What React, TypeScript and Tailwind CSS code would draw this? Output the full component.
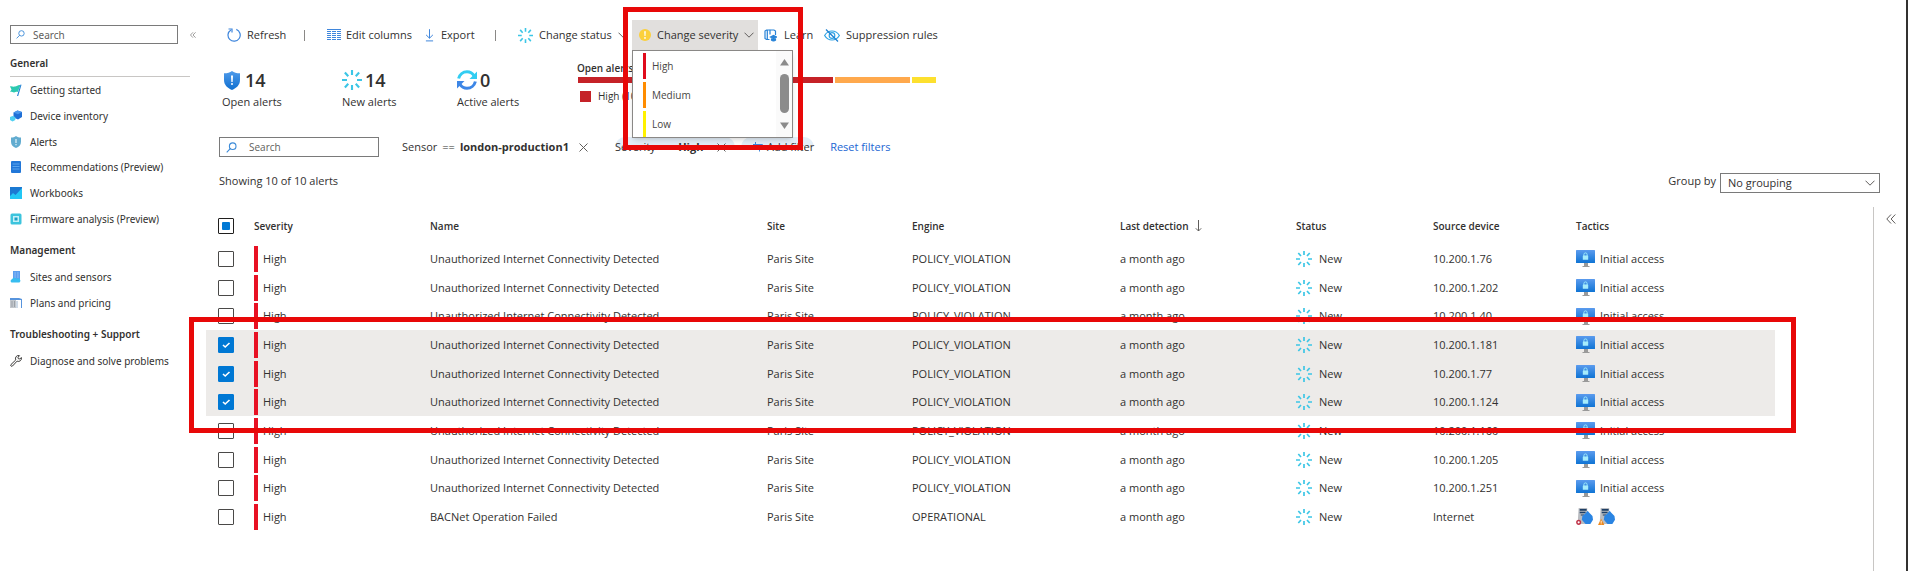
import React from "react";

type IconProps = { className?: string };

function Magnifier({ className }: IconProps) {
  return (
    <svg viewBox="0 0 12 12" className={className} fill="none" stroke="#3b8ad8" strokeWidth="1.200">
      <circle cx="7.3" cy="4.5" r="3.6" />
      <path d="M4.9 7 .8 11.200" />
    </svg>
  );
}

function DoubleChevron({ className }: IconProps) {
  return (
    <svg viewBox="0 0 10 10" className={className} fill="none" stroke="#605e5c" strokeWidth="1">
      <path d="M5 .5.8 5 5 9.500M9.300.5 5.100 5l4.200 4.500" />
    </svg>
  );
}

function Chevron({ className }: IconProps) {
  return (
    <svg viewBox="0 0 10 6" className={className} fill="none" stroke="#605e5c" strokeWidth="1">
      <path d="M.5.7 5 5.200 9.500.7" />
    </svg>
  );
}

function Close({ className }: IconProps) {
  return (
    <svg viewBox="0 0 9 9" className={className} fill="none" stroke="#605e5c" strokeWidth="1">
      <path d="m.5.500 8 8m0-8-8 8" />
    </svg>
  );
}

function Spark({ className }: IconProps) {
  return (
    <svg viewBox="0 0 16 16" className={className} fill="none" stroke="#3cc6e6" strokeWidth="1.700">
      <path d="M8 0v4M8 12v4M0 8h4M12 8h4M2.300 2l2.700 3M11 11l2.700 3M13.700 2 11 5M5 11l-2.700 3" />
    </svg>
  );
}

function RefreshIcon({ className }: IconProps) {
  return (
    <svg viewBox="0 0 14 14" className={className} fill="none" stroke="#3f86dc" strokeWidth="1.200">
      <path d="M9.300 1.400A6.100 6.100 0 1 1 3.900 1.900" />
      <path d="M1.500 1h3.500v3.500" />
    </svg>
  );
}

function ColumnsIcon({ className }: IconProps) {
  return (
    <svg viewBox="0 0 14 12" className={className} fill="none" stroke="#3f86dc" strokeWidth="1">
      <path d="M0 .5h14" />
      <path d="M0 2.500h14M0 4.500h14M0 6.500h14M0 8.500h14M0 10.500h14" strokeDasharray="4 1" />
    </svg>
  );
}

function ExportIcon({ className }: IconProps) {
  return (
    <svg viewBox="0 0 10 14" className={className} fill="none" stroke="#3f86dc" strokeWidth="1.100">
      <path d="M5 0v10M1.200 6.300 5 10l3.800-3.700M1 13h8" />
    </svg>
  );
}

function WarningDot({ className }: IconProps) {
  return (
    <svg viewBox="0 0 12 12" className={className}>
      <circle cx="6" cy="6" r="6" fill="#fbd03b" />
      <path d="M5.200 2.200h1.600L6.500 7h-1z" fill="#fff" />
      <circle cx="6" cy="8.900" r=".9" fill="#fff" />
    </svg>
  );
}

function LearnIcon({ className }: IconProps) {
  return (
    <svg viewBox="0 0 13 13" className={className} fill="none" stroke="#2783d8" strokeWidth="1.200">
      <path d="M5.500 10.500H2.500L1 9.500V2l1.500-1H5.500l.5.500.500-.500H10L11.500 2V6M3.300 1v9.500M6 1.500v4" />
      <path d="M6.500 8 9.500 6.500 12.500 8 9.500 9.500z" fill="#2783d8" />
      <path d="M7.500 9.500v1.700c1 1 3 1 4 0V9.500" fill="#2783d8" />
    </svg>
  );
}

function HiddenEye({ className }: IconProps) {
  return (
    <svg viewBox="0 0 16 13" className={className} fill="none" stroke="#2fa3e4" strokeWidth="1.200">
      <path d="M.6 6.500C2.500 3.300 5 2 8 2s5.500 1.300 7.400 4.500C13.500 9.700 11 11 8 11S2.500 9.700.6 6.500z" />
      <circle cx="8" cy="6.500" r="2.800" />
      <path d="m2 .5 12 12" stroke="#1b7fd0" />
    </svg>
  );
}

function BlueShield({ className }: IconProps) {
  return (
    <svg viewBox="0 0 16 19" className={className}>
      <defs>
        <linearGradient id="shield" x2="0" y2="1">
          <stop stopColor="#4f9bea" />
          <stop offset="1" stopColor="#0f6fd0" />
        </linearGradient>
      </defs>
      <path d="M8 0c2 1.600 4.500 2.300 8 2.300V9c0 5-3.500 8-8 10-4.500-2-8-5-8-10V2.300C3.500 2.300 6 1.600 8 0z" fill="url(#shield)" />
      <path d="M7 4.500h2L8.600 11H7.400z" fill="#fff" />
      <circle cx="8" cy="13" r="1" fill="#fff" />
    </svg>
  );
}

function SyncIcon({ className }: IconProps) {
  return (
    <svg viewBox="0 0 20 20" className={className} fill="none">
      <path d="M1.600 8.500C2.600 4.500 6 1.800 10 1.800c3 0 5.500 1.500 7 4" stroke="#32cdf2" strokeWidth="3" />
      <path d="M20 1.500V9h-7.500z" fill="#32cdf2" />
      <path d="M18.400 11.500c-1 4-4.400 6.700-8.400 6.700-3 0-5.500-1.500-7-4" stroke="#3d86e6" strokeWidth="3" />
      <path d="M0 18.500V11h7.500z" fill="#3d86e6" />
    </svg>
  );
}

function FlagIcon() {
  return (
    <svg viewBox="0 0 12 12" className="size-3 shrink-0">
      <path d="M0 2.500c1.500-.5 3 .5 5 0s3-2 5.500-1.500L7.800 8C6 7.500 5.500 8.500 4 8.500S1.500 7.500 0 8l1.500-2.500z" fill="#2cc9b0" />
      <path d="m10.500.5 1 .3L8.200 12H7z" fill="#1f7fd6" />
    </svg>
  );
}

function CubesIcon() {
  return (
    <svg viewBox="0 0 12 12" className="size-3 shrink-0">
      <path d="M7.500.5 12 2v5L8 9.500 3.500 7.500V2.500z" fill="#1f6fd6" />
      <path d="M7.500.5 12 2 8 4.200 3.500 2.500z" fill="#4b97ec" />
      <path d="m2.500 6 2.800 1v3L2.500 11.500 0 10V7z" fill="#4fd0f2" />
    </svg>
  );
}

function AlertShield() {
  return (
    <svg viewBox="0 0 12 12" className="size-3 shrink-0">
      <path d="M6 0c1.500 1 3 1.500 5 1.500v4.300C11 9 9 11 6 12 3 11 1 9 1 5.800V1.500C3 1.500 4.500 1 6 0z" fill="#62acd0" />
      <path d="M5.400 3h1.200v4H5.400zM5.400 8h1.200v1.200H5.400z" fill="#e4f3fa" />
    </svg>
  );
}

function ListIcon() {
  return (
    <svg viewBox="0 0 12 12" className="size-3 shrink-0">
      <rect x="1" width="10" height="12" rx="1" fill="#2277d8" />
      <path d="M2.500 3h7M2.500 5.500h7M2.500 8h7" stroke="#5aa5ee" />
    </svg>
  );
}

function WorkbookIcon() {
  return (
    <svg viewBox="0 0 12 12" className="size-3 shrink-0">
      <rect width="12" height="12" rx=".6" fill="#2cb4f0" />
      <path d="M0 12V9l3-3 2.500 2L12 1v11z" fill="#22c7f5" />
      <path d="M0 0h12v1L5.500 8 3 6 0 9z" fill="#1b79d2" />
    </svg>
  );
}

function ChipIcon() {
  return (
    <svg viewBox="0 0 12 12" className="size-3 shrink-0">
      <rect x=".5" y=".5" width="11" height="11" rx="1.500" fill="#3cc4dd" />
      <rect x="3" y="3" width="6" height="6" fill="#c4f1f8" />
      <rect x="4.500" y="4.500" width="3" height="3" fill="#1d9ec6" />
    </svg>
  );
}

function SitesIcon() {
  return (
    <svg viewBox="0 0 12 12" className="size-3 shrink-0">
      <path d="M3 0h7v9H3z" fill="#5c9ff0" />
      <path d="M4.500 2h1.200M7.300 2h1.200M4.500 4h1.200M7.300 4h1.200M4.500 6h1.200M7.300 6h1.200" stroke="#a8cbf7" />
      <path d="M1.500 11.500a1.800 1.800 0 0 1 .5-3.300 2.600 2.600 0 0 1 4.600-.3A2 2 0 0 1 9.500 11.500z" fill="#37bdf0" />
    </svg>
  );
}

function PlansIcon() {
  return (
    <svg viewBox="0 0 12 12" className="size-3 shrink-0">
      <path d="M0 1h9l3 1v9h-1V3H0z" fill="#5794dd" />
      <path d="M0 3h6v8H0z" fill="#c3c7cc" />
      <path d="M1.500 5h1M1.500 7h1M1.500 9h1M4 5h1M4 7h1M4 9h1" stroke="#737a82" />
      <path d="M7 4v7" stroke="#9fb6cf" />
    </svg>
  );
}

function WrenchIcon() {
  return (
    <svg viewBox="0 0 12 12" className="size-3 shrink-0" fill="none" stroke="#3b3a39" strokeWidth="1">
      <path d="M11.300 2.500a3 3 0 0 1-4.200 3.600L2.500 11a1 1 0 0 1-1.500-1.500l4.800-4.600A3 3 0 0 1 9.500.7L8 2.200l.3 1.500 1.500.3z" />
    </svg>
  );
}

function MonitorLock() {
  return (
    <svg viewBox="0 0 19 17" className="h-[17px] w-[19px]">
      <defs>
        <linearGradient id="screen" x2="0" y2="1">
          <stop stopColor="#5b9bee" />
          <stop offset="1" stopColor="#0f74d4" />
        </linearGradient>
      </defs>
      <rect width="19" height="13" rx=".5" fill="url(#screen)" />
      <path d="M8 13h4v3H8zM6.500 16h7v1h-7z" fill="#9a9a9a" />
      <path d="M7.900 6V4.500a1.600 1.600 0 0 1 3.200 0V6" fill="none" stroke="#9be9fb" />
      <rect x="6.800" y="5.500" width="5.400" height="4.300" rx=".4" fill="#a5ecfc" />
    </svg>
  );
}

function DeviceHand({ badge }: { badge: "error" | "warning" }) {
  return (
    <svg viewBox="0 0 16 16" className="size-[17px]">
      <path d="M2.500 0h8v15h-9z" fill="#b9bcc1" />
      <path d="M3.500 1h6.500v1.500H3.500zM3.500 3.500H9V5H3.500zM4.500 6h3v1h-3z" fill="#1e3f66" />
      <path d="M6 7.500 9 5l2-2.500 1.500 2L15.500 7.500 16 11l-2.500 4H9L5.500 11z" fill="#2a84e2" />
      {badge === "error" ? (
        <circle cx="2.500" cy="13.500" r="1.700" fill="#fff" stroke="#c0354a" strokeWidth="1.400" />
      ) : (
        <>
          <path d="m3 10 3 6H0z" fill="#f08a1c" />
          <path d="M3 12v2M3 14.500v.8" stroke="#fff" strokeWidth=".8" />
        </>
      )}
    </svg>
  );
}

type NavItem = { label: string; icon: React.ReactNode };

const general: NavItem[] = [
  { label: "Getting started", icon: <FlagIcon /> },
  { label: "Device inventory", icon: <CubesIcon /> },
  { label: "Alerts", icon: <AlertShield /> },
  { label: "Recommendations (Preview)", icon: <ListIcon /> },
  { label: "Workbooks", icon: <WorkbookIcon /> },
  { label: "Firmware analysis (Preview)", icon: <ChipIcon /> },
];
const management: NavItem[] = [
  { label: "Sites and sensors", icon: <SitesIcon /> },
  { label: "Plans and pricing", icon: <PlansIcon /> },
];
const support: NavItem[] = [{ label: "Diagnose and solve problems", icon: <WrenchIcon /> }];

function NavList({ items }: { items: NavItem[] }) {
  return (
    <ul>
      {items.map((item) => (
        <li key={item.label} className="h-[26px] nth-[3n]:h-[25px]">
          <a href="#" className="flex h-full items-center gap-2 whitespace-nowrap">
            {item.icon}
            {item.label}
          </a>
        </li>
      ))}
    </ul>
  );
}

function Sidebar() {
  return (
    <aside className="w-[198px] shrink-0 pl-[10px] pt-[25px] font-['Noto_Sans','Open_Sans',sans-serif] text-[10px] leading-4">
      <div className="flex items-center justify-between pr-[2px]">
        <label className="flex h-[19px] w-[168px] items-center gap-2 border border-[#7a7a7a] pl-[5px]">
          <Magnifier className="size-[9px] shrink-0" />
          <input aria-label="Search menu" placeholder="Search" className="w-full outline-none placeholder:text-[#605e5c]" />
        </label>
        <button aria-label="Collapse menu">
          <DoubleChevron className="size-[6px]" />
        </button>
      </div>
      <h2 className="mr-2 border-b border-[#c8c6c4] pb-[5px] pt-[11px] font-semibold">General</h2>
      <NavList items={general} />
      <h2 className="pb-[6px] pt-[11px] font-semibold">Management</h2>
      <NavList items={management} />
      <h2 className="pb-[6px] pt-[10px] font-semibold">Troubleshooting + Support</h2>
      <NavList items={support} />
    </aside>
  );
}

const severities = [
  { label: "High", bar: "bg-[#e00b1c]" },
  { label: "Medium", bar: "bg-[#ff8c00]" },
  { label: "Low", bar: "bg-[#fff100]" },
];

function SeverityMenu() {
  return (
    <div className="absolute left-0 top-[30px] z-10 flex h-[88px] w-[161px] border border-[#8a8886] bg-white text-[10px] shadow-md">
      <ul role="menu" className="flex-1 pl-[10px]">
        {severities.map((s) => (
          <li key={s.label} role="none" className="flex h-[29px] items-center gap-[6px]">
            <span className={`h-[26px] w-[3px] ${s.bar}`} />
            <button role="menuitem" className="pt-px text-[#484644]">
              {s.label}
            </button>
          </li>
        ))}
      </ul>
      <div className="flex w-4 flex-col items-center bg-[#fafafa] py-2">
        <svg viewBox="0 0 9 7" className="h-[7px] w-[9px]" fill="#8b8b8b">
          <path d="M4.500 0 9 6.500H0z" />
        </svg>
        <span className="mt-2 h-[39px] w-[9px] rounded-full bg-[#8b8b8b]" />
        <svg viewBox="0 0 9 7" className="mt-[9px] h-[7px] w-[9px]" fill="#8b8b8b">
          <path d="M4.500 7 0 .5h9z" />
        </svg>
      </div>
    </div>
  );
}

function Toolbar() {
  return (
    <div className="flex h-[30px] items-center whitespace-nowrap pl-[21px] text-[11px]">
      <button className="flex w-[77px] items-center gap-[6px]">
        <RefreshIcon className="size-[14px]" />
        Refresh
      </button>
      <span className="mr-[22px] h-[11px] w-px bg-[#8a8886]" />
      <button className="flex w-[98px] items-center gap-[5px]">
        <ColumnsIcon className="h-3 w-[14px]" />
        Edit columns
      </button>
      <button className="flex w-[70px] items-center gap-[7px]">
        <ExportIcon className="h-[13px] w-[9px]" />
        Export
      </button>
      <span className="mr-[22px] h-[11px] w-px bg-[#8a8886]" />
      <button className="flex w-[114px] items-center gap-[6px]">
        <Spark className="size-[15px] shrink-0" />
        Change status
        <Chevron className="h-[6px] w-[10px] shrink-0" />
      </button>
      <div className="relative h-[30px]">
        <button className="flex h-full w-[126px] items-center gap-[6px] bg-[#e1dfdd] pl-[7px]">
          <WarningDot className="size-3 shrink-0" />
          Change severity
          <Chevron className="h-[6px] w-[10px] shrink-0" />
        </button>
        <SeverityMenu />
        <div className="pointer-events-none absolute -left-[9px] -top-[13px] z-20 h-[143px] w-[180px] border-[5px] border-[#e80808]" />
      </div>
      <button className="ml-[6px] flex w-[60px] items-center gap-[7px]">
        <LearnIcon className="size-[13px]" />
        Learn
      </button>
      <button className="flex items-center gap-[6px]">
        <HiddenEye className="h-[13px] w-4" />
        Suppression rules
      </button>
    </div>
  );
}

function Stat({ icon, value, label, className }: { icon: React.ReactNode; value: number; label: string; className: string }) {
  return (
    <div className={className}>
      <div className="flex h-7 items-center gap-[3px] text-[18px] font-semibold">
        {icon}
        {value}
      </div>
      <div className="text-[11px] font-medium leading-4">{label}</div>
    </div>
  );
}

function Summary() {
  return (
    <div className="flex h-[64px] items-start pl-4 pt-4">
      <Stat className="w-[120px]" icon={<BlueShield className="mx-[2px] h-[19px] w-4" />} value={14} label="Open alerts" />
      <Stat className="w-[115px]" icon={<Spark className="size-5" />} value={14} label="New alerts" />
      <Stat className="w-[120px]" icon={<SyncIcon className="size-5" />} value={0} label="Active alerts" />
      <div className="-mt-[6px] w-[360px] text-[10px] leading-4">
        <div className="font-semibold">Open alerts</div>
        <div className="mt-[1px] flex h-[6px] gap-[2px] pl-px">
          <span className="w-[255px] bg-[#c52228]" />
          <span className="w-[75px] bg-[#ffa94d]" />
          <span className="w-6 bg-[#fde02f]" />
        </div>
        <div className="mt-[5px] flex items-center gap-[7px] pl-[3px]">
          <span className="size-[11px] bg-[#c52228]" />
          High (10)
        </div>
      </div>
    </div>
  );
}

function Filters() {
  return (
    <div className="mt-[23px] flex h-[20px] items-center whitespace-nowrap pl-[13px] text-[11px]">
      <label className="flex h-[20px] w-[160px] items-center gap-3 border border-[#7a7a7a] pl-[6px] text-[10px]">
        <Magnifier className="size-[11px] shrink-0" />
        <input aria-label="Search alerts" placeholder="Search" className="w-full outline-none placeholder:text-[#605e5c]" />
      </label>
      <div className="ml-[23px] flex w-[213px] items-center justify-between pr-[27px]">
        <span className="flex gap-[5px]">
          Sensor <span>==</span> <b className="font-bold">london-production1</b>
        </span>
        <button aria-label="Remove sensor filter">
          <Close className="size-[9px]" />
        </button>
      </div>
      <div className="flex h-5 w-[120px] items-center justify-between rounded-full bg-linear-to-b from-[#e3eef8] from-50% to-white to-50% pr-[9px]">
        <span className="flex gap-[5px]">
          Severity <span>==</span> <b className="font-bold">High</b>
        </span>
        <button aria-label="Remove severity filter">
          <Close className="size-[9px]" />
        </button>
      </div>
      <button className="ml-[6px] flex h-5 items-center gap-1 rounded-full bg-linear-to-b from-[#e3eef8] from-50% to-white to-50% pl-3">
        <svg viewBox="0 0 10 10" className="size-[10px]" fill="none" stroke="#3f86dc">
          <path d="M2.500 0v5M0 2.500h9.500L6.500 6v3.500" />
        </svg>
        Add filter
      </button>
      <button className="ml-4 text-[#2266d3]">Reset filters</button>
    </div>
  );
}

type Alert = { name: string; engine: string; source: string; selected?: boolean; operational?: boolean };
const unauthorized = { name: "Unauthorized Internet Connectivity Detected", engine: "POLICY_VIOLATION" };
const alerts: Alert[] = [
  { ...unauthorized, source: "10.200.1.76" },
  { ...unauthorized, source: "10.200.1.202" },
  { ...unauthorized, source: "10.200.1.40" },
  { ...unauthorized, source: "10.200.1.181", selected: true },
  { ...unauthorized, source: "10.200.1.77", selected: true },
  { ...unauthorized, source: "10.200.1.124", selected: true },
  { ...unauthorized, source: "10.200.1.160" },
  { ...unauthorized, source: "10.200.1.205" },
  { ...unauthorized, source: "10.200.1.251" },
  { name: "BACNet Operation Failed", engine: "OPERATIONAL", source: "Internet", operational: true },
];

const columns = [
  { label: "Severity", width: "w-[176px]" },
  { label: "Name", width: "w-[337px]" },
  { label: "Site", width: "w-[145px]" },
  { label: "Engine", width: "w-[208px]" },
  { label: "Last detection", width: "w-[176px]" },
  { label: "Status", width: "w-[137px]" },
  { label: "Source device", width: "w-[143px]" },
  { label: "Tactics", width: "" },
];

function CheckBox({ label, checked }: { label: string; checked?: boolean }) {
  return (
    <span className="relative block size-4">
      <input
        type="checkbox"
        aria-label={label}
        defaultChecked={checked}
        className="peer block size-4 appearance-none rounded-[1px] border border-[#4a4948] bg-white checked:border-[#0078d4] checked:bg-[#0078d4]"
      />
      <svg viewBox="0 0 16 16" className="pointer-events-none absolute inset-0 hidden size-4 peer-checked:block" fill="none" stroke="#fff" strokeWidth="1.600">
        <path d="m5 8 2.200 2L11.500 6" />
      </svg>
    </span>
  );
}

function AlertsTable() {
  return (
    <div className="relative mr-[98px]">
      <table className="w-full table-fixed text-left text-[11px] leading-4">
        <thead>
          <tr className="h-[37px]">
            <th className="w-12 pl-3">
              <button role="checkbox" aria-checked="mixed" aria-label="Select all alerts" className="flex size-4 items-center justify-center rounded-[1px] border border-[#201f1e]">
                <span className="size-2 rounded-[1px] bg-[#0078d4]" />
              </button>
            </th>
            {columns.map((c) => (
              <th key={c.label} className={`text-[10px] font-semibold ${c.width}`}>
                <span className="flex items-center gap-[6px]">
                  {c.label}
                  {c.label === "Last detection" && (
                    <svg viewBox="0 0 7 12" className="h-3 w-[7px]" fill="none" stroke="#605e5c">
                      <path d="M3.500 0v11M.8 8.300l2.700 2.700 2.700-2.700" />
                    </svg>
                  )}
                </span>
              </th>
            ))}
          </tr>
        </thead>
        <tbody>
          {alerts.map((a) => (
            <tr key={a.source} className={`h-[29px] nth-[3n]:h-7 ${a.selected ? "bg-[#edebe9]" : ""}`}>
              <td className="pl-3">
                <CheckBox label={`Select alert from ${a.source}`} checked={a.selected} />
              </td>
              <td>
                <span className="flex items-center gap-[5px]">
                  <span className="h-[26px] w-1 bg-[#e81123]" />
                  High
                </span>
              </td>
              <td>{a.name}</td>
              <td>Paris Site</td>
              <td>{a.engine}</td>
              <td>a month ago</td>
              <td>
                <span className="flex items-center gap-[7px]">
                  <Spark className="size-4" />
                  New
                </span>
              </td>
              <td>{a.source}</td>
              <td>
                <span className="flex items-center gap-[5px]">
                  {a.operational ? (
                    <>
                      <DeviceHand badge="error" />
                      <DeviceHand badge="warning" />
                    </>
                  ) : (
                    <>
                      <MonitorLock />
                      Initial access
                    </>
                  )}
                </span>
              </td>
            </tr>
          ))}
        </tbody>
      </table>
      <div className="pointer-events-none absolute -left-[17px] -right-[21px] top-[110px] h-[116px] border-[5px] border-[#e80808]" />
    </div>
  );
}

export default function App() {
  return (
    <div className="flex min-h-screen border-r-2 border-[#323130] bg-white font-['Open_Sans','Noto_Sans',sans-serif] text-[#323130]">
      <Sidebar />
      <main className="ml-2 flex min-w-0 flex-1 flex-col pt-5">
        <Toolbar />
        <Summary />
        <Filters />
        <div className="mt-4 flex h-5 items-start justify-between pl-[13px] pr-[26px] text-[11px] leading-4">
          <span>Showing 10 of 10 alerts</span>
          <label className="flex items-start gap-1 font-medium">
            Group by
            <span className="relative flex items-center">
              <select className="h-5 w-[160px] appearance-none border border-[#7a7a7a] pl-[7px] text-[11px] font-normal">
                <option>No grouping</option>
              </select>
              <Chevron className="pointer-events-none absolute right-[5px] h-[6px] w-[10px]" />
            </span>
          </label>
        </div>
        <div className="mt-[14px] flex flex-1">
          <div className="min-w-0 flex-1">
            <AlertsTable />
          </div>
          <div className="w-[33px] border-l border-[#c8c6c4] pl-3 pt-[7px]">
            <button aria-label="Expand details" className="block">
              <DoubleChevron className="size-[10px]" />
            </button>
          </div>
        </div>
      </main>
    </div>
  );
}
